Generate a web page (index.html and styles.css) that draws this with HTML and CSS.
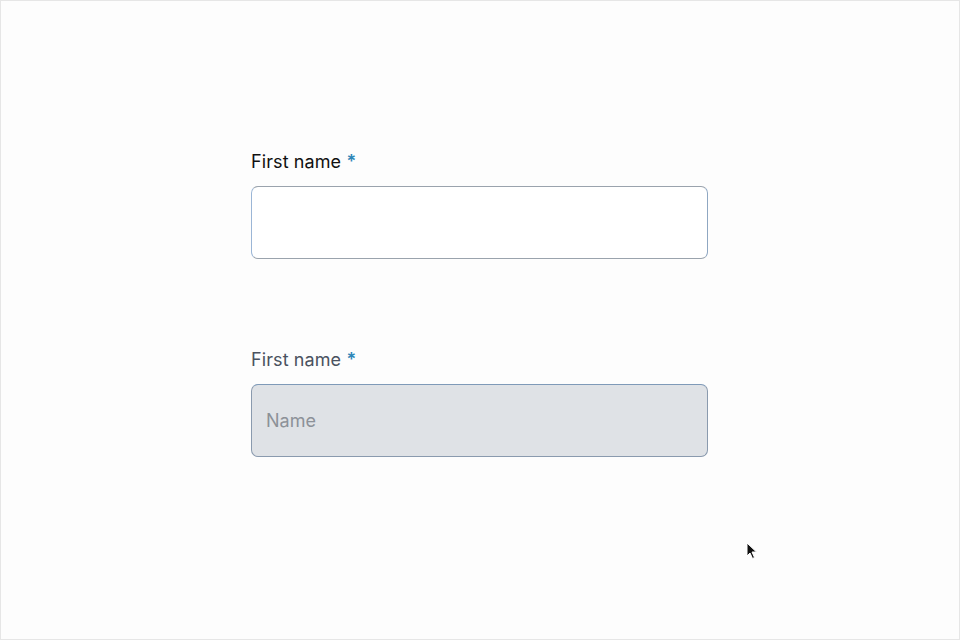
FILE: index.html
```html
<!DOCTYPE html>
<html>
<head>
<meta charset="utf-8">
<link rel="stylesheet" href="styles.css">
</head>
<body>
<div class="frame">
  <form class="form">
    <div class="field">
      <label class="label">First name <span class="req">*</span></label>
      <input class="input" type="text">
    </div>
    <div class="field field-muted">
      <label class="label">First name <span class="req">*</span></label>
      <input class="input input-disabled" type="text" placeholder="Name">
    </div>
  </form>
  <svg class="cursor" width="12" height="18" viewBox="0 0 12 18"><path d="M1 1 L1 14 L4 11 L6.5 16.5 L8.5 15.5 L6 10 L10.5 10 Z" fill="#111" stroke="#fff" stroke-width="1"/></svg>
</div>
</body>
</html>
```

FILE: styles.css
```css
html, body {
  margin: 0;
  padding: 0;
}
body {
  font-family: Inter, "Noto Sans", sans-serif;
  background: #fdfdfd;
}
.frame {
  position: relative;
  box-sizing: border-box;
  width: 960px;
  height: 640px;
  border: 1px solid #e6e6e6;
  background: #fdfdfd;
}
.form {
  display: flex;
  flex-direction: column;
  gap: 89px;
  width: 457px;
  padding: 149px 0 0 250px;
}
.field {
  display: flex;
  flex-direction: column;
  gap: 12px;
}
.label {
  font-size: 18px;
  line-height: 24px;
  color: #111;
  letter-spacing: 0.1px;
}
.field-muted .label {
  color: #4a5260;
}
.req {
  color: #2e86b8;
  font-weight: 600;
}
.input {
  box-sizing: border-box;
  height: 73px;
  width: 457px;
  margin: 0;
  border: 1px solid #9aa3ad;
  border-left-color: #9bb6d6;
  border-right-color: #8fa7c2;
  border-radius: 7px;
  background: #ffffff;
  padding: 0 14px;
  font-family: Inter, "Noto Sans", sans-serif;
  font-size: 18px;
  outline: none;
}
.input-disabled {
  height: 73px;
  background: #dfe2e6;
  border-color: #8a9aae;
  border-top-color: #7f9ab8;
}
.input-disabled::placeholder {
  color: #8c9198;
}
.cursor {
  position: absolute;
  left: 745px;
  top: 541px;
}
```
